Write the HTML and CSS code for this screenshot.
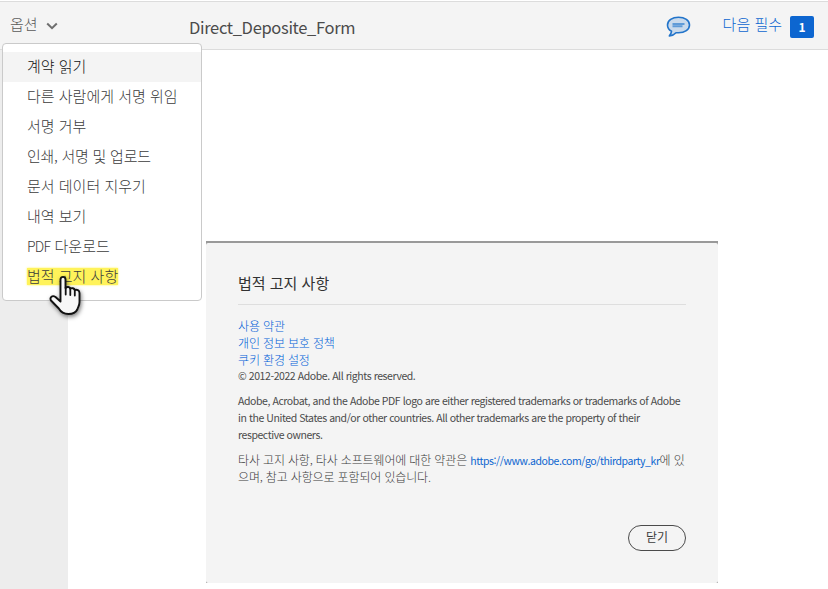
FILE: index.html
```html
<!DOCTYPE html>
<html lang="ko">
<head>
  <meta charset="utf-8">
  <title>Direct_Deposite_Form</title>
  <link rel="stylesheet" href="styles.css">
</head>
<body>
  <header class="topbar">
    <div class="options">
      <span>옵션</span>
      <svg class="chevron" width="12" height="8" viewBox="0 0 12 8"><path d="M1.200 1.500L6 6.200l4.800-4.700" fill="none" stroke="#6e6e6e" stroke-width="2"/></svg>
    </div>
    <h1 class="title">Direct_Deposite_Form</h1>
    <svg class="comment" width="26" height="22" viewBox="0 0 26 22">
      <path d="M13.500 1.200C7.200 1.200 2.500 4.500 2.500 9c0 2.700 1.500 4.900 4 6.300-.2 1.900-.9 3.200-2.200 4.700 2.900-.3 5-1.400 6.700-3.300.8.100 1.700.1 2.500.1 6.300 0 11-3.300 11-7.800s-4.700-7.800-11-7.800z" fill="#c9daec" stroke="#2274ca" stroke-width="1.600" stroke-linejoin="round"/>
      <path d="M7.500 8h12M7.500 10.300h10" stroke="#5f9bd8" stroke-width="1.900"/>
    </svg>
    <a class="next">다음 필수</a>
    <span class="count">1</span>
  </header>

  <div class="page">
    <aside class="side"></aside>
    <main class="content">
      <div class="dialog-frame">
        <section class="dialog">
          <h2>법적 고지 사항</h2>
          <div class="links">
            <a>사용 약관</a>
            <a>개인 정보 보호 정책</a>
            <a>쿠키 환경 설정</a>
            <span class="latin">© 2012-2022 Adobe. All rights reserved.</span>
          </div>
          <p class="latin">Adobe, Acrobat, and the Adobe PDF logo are either registered trademarks or trademarks of Adobe<br>in the United States and/or other countries. All other trademarks are the property of their<br>respective owners.</p>
          <p class="third">타사 고지 사항, 타사 소프트웨어에 대한 약관은 <a class="latin">https://www.adobe.com/go/thirdparty_kr</a>에 있<br>으며, 참고 사항으로 포함되어 있습니다.</p>
          <button class="close">닫기</button>
        </section>
      </div>
    </main>
  </div>

  <ul class="menu">
    <li class="active">계약 읽기</li>
    <li>다른 사람에게 서명 위임</li>
    <li>서명 거부</li>
    <li class="tight">인쇄, 서명 및 업로드</li>
    <li>문서 데이터 지우기</li>
    <li>내역 보기</li>
    <li><span class="pdf">PDF</span> 다운로드</li>
    <li><mark>법적 고지 사항</mark></li>
  </ul>
  <svg class="hand" width="36" height="44" viewBox="0 0 36 44">
    <path d="M11.500 22V4.500C11.500 1 16.500 1 16.500 4.500V13c1.500-1.500 4.200-1.200 4.800.6 1.500-.9 3.900-.4 4.400 1.400 2-.7 4.800.2 4.800 3V27c0 4-1.700 5-2.200 7.500-1.500 3-4.300 4.500-8.800 4.500-5 0-7.700-2-9.700-5.500L2 25.500c-1.700-3.500 1.500-5.500 4.500-3.500l5 4.500z" fill="#f7f7f7" stroke="#111" stroke-width="1.900" stroke-linejoin="round"/>
    <path d="M16.700 12.500v7M21.300 13.500V20M25.800 15V20.500" stroke="#111" stroke-width="1.800" stroke-linecap="round"/>
  </svg>
</body>
</html>
```
FILE: styles.css
```css
* {
  box-sizing: border-box;
}
body {
  margin: 0;
  height: 589px;
  display: flex;
  flex-direction: column;
  overflow: hidden;
  background: #fff;
  color: #3c3c3c;
  font-family: "Noto Sans CJK KR", sans-serif;
  font-weight: 300;
  white-space: nowrap;
}
.topbar {
  display: flex;
  align-items: center;
  height: 49px;
  margin-top: 1px;
  padding: 0 14px 0 10px;
  background: #f4f4f4;
  border-top: 1px solid #dcdcdc;
  border-bottom: 1px solid #dcdcdc;
  flex: none;
}
.options {
  display: flex;
  align-items: center;
  gap: 8px;
  width: 179px;
  padding-bottom: 4px;
  font-size: 15px;
  color: #5a5a5a;
}
.chevron {
  margin-top: 5px;
}
.title {
  margin: 2px 0 0;
  font-size: 16.5px;
  font-weight: 400;
  letter-spacing: -.33px;
  color: #4b4b4b;
}
.comment {
  margin-top: 2px;
  margin-left: auto;
}
.next {
  margin: 0 8px 0 32px;
  padding-bottom: 5px;
  font-size: 15px;
  color: #0d66d0;
}
.count {
  width: 24px;
  height: 22px;
  margin-top: 3px;
  border-radius: 2px;
  background: #0d66d0;
  color: #fff;
  font-size: 12px;
  font-weight: 700;
  line-height: 22px;
  text-align: center;
}
.page {
  display: flex;
  flex: 1;
}
.side {
  width: 68px;
  background: #ededed;
}
.content {
  padding: 191px 0 0 138px;
}
.dialog-frame {
  width: 512px;
  height: 342px;
  padding-top: 2px;
  background: #999;
}
.dialog {
  display: flex;
  flex-direction: column;
  height: 340px;
  padding: 29px 32px 32px;
  border-radius: 2px;
  background: #f4f4f4;
  font-size: 12px;
}
.dialog h2 {
  height: 33px;
  margin: 0 0 12px;
  border-bottom: 1px solid #dedede;
  font-size: 15px;
  font-weight: 400;
  line-height: 22px;
  color: #323232;
}
.dialog a {
  color: #0060d8;
}
.links {
  display: flex;
  flex-direction: column;
  line-height: 17px;
  letter-spacing: -.15px;
}
.links .latin {
  margin-top: -1px;
}
.dialog p {
  margin: 8px 0 0;
  line-height: 17px;
}
.dialog .third {
  margin-top: 9px;
  line-height: 16px;
  letter-spacing: -.15px;
}
.dialog .latin {
  font-size: 10.5px;
  font-weight: 400;
  letter-spacing: -.43px;
  color: #4b4b4b;
}
.dialog a.latin {
  color: #0d66d0;
}
.close {
  align-self: flex-end;
  width: 58px;
  height: 26px;
  margin-top: auto;
  padding: 0 0 3px;
  border: 1px solid #4b4b4b;
  border-radius: 13px;
  background: none;
  color: #3c3c3c;
  font-family: inherit;
  font-size: 12px;
  line-height: 20px;
}
.menu {
  position: absolute;
  left: 2px;
  top: 43px;
  width: 200px;
  height: 258px;
  margin: 0;
  padding: 8px 0;
  list-style: none;
  background: #fff;
  border: 1px solid #cacaca;
  border-radius: 4px;
  font-size: 15px;
}
.menu li {
  height: 30px;
  padding-left: 24px;
  line-height: 27px;
}
.menu .active {
  background: #f4f4f4;
  color: #111;
}
.menu .tight {
  letter-spacing: -.25px;
}
.menu .pdf {
  font-size: 14px;
  letter-spacing: -.7px;
}
.menu mark {
  display: inline-block;
  height: 17px;
  line-height: 15px;
  background: #fff35a;
  box-shadow: 0 0 2px #fff35a;
  color: inherit;
}
.hand {
  position: absolute;
  left: 49px;
  top: 275px;
  filter: drop-shadow(1px 2px 2px rgba(0, 0, 0, .5));
}
```
